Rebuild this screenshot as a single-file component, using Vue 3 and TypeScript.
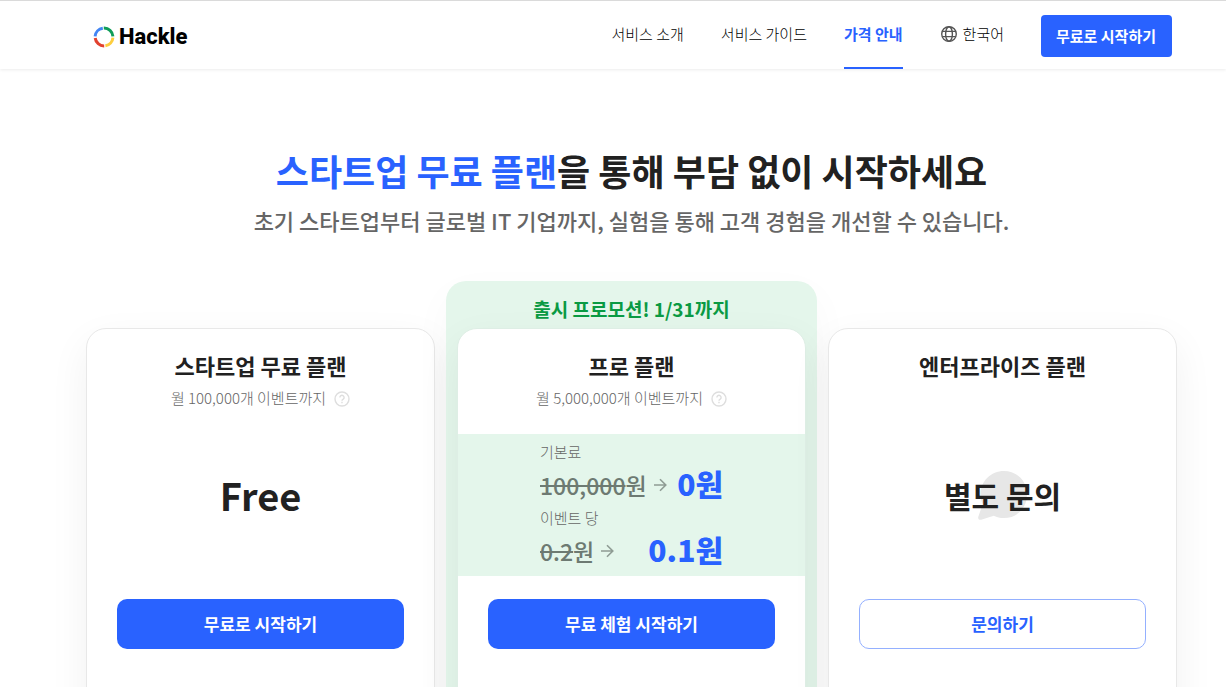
<script setup lang="ts">
interface NavItem {
  label: string
  active?: boolean
}

const navItems: NavItem[] = [
  { label: '서비스 소개' },
  { label: '서비스 가이드' },
  { label: '가격 안내', active: true },
]
</script>

<template>
  <div class="page">
    <header class="header">
      <a class="brand" href="#" aria-label="Hackle">
        <svg class="brand-mark" viewBox="0 0 22 22" fill="none" stroke-width="3" aria-hidden="true">
          <path d="M2.1 10.4A8.9 8.9 0 0 1 9.8 2.2" stroke="#4285f4" />
          <path d="M10.8 2.1A8.9 8.9 0 0 1 19.9 10.4" stroke="#0f9d58" />
          <path d="M19.9 11.6A8.9 8.9 0 0 1 12.4 19.8" stroke="#fdce3f" />
          <path d="M11.2 19.9A8.9 8.9 0 0 1 2.2 12" stroke="#e2422f" />
        </svg>
        <span>Hackle</span>
      </a>
      <nav class="nav">
        <a
          v-for="item in navItems"
          :key="item.label"
          class="nav-link"
          :class="{ active: item.active }"
          href="#"
        >{{ item.label }}</a>
        <button class="language" type="button">
          <svg viewBox="0 0 18 18" fill="none" stroke="#555" stroke-width="1.4" aria-hidden="true">
            <circle cx="9" cy="9" r="7.3" />
            <ellipse cx="9" cy="9" rx="3.4" ry="7.3" />
            <path d="M2.3 6.4h13.4M2.3 11.6h13.4" />
          </svg>
          <span>한국어</span>
        </button>
        <button class="start" type="button">무료로 시작하기</button>
      </nav>
    </header>

    <main class="main">
      <h1><em>스타트업 무료 플랜</em>을 통해 부담 없이 시작하세요</h1>
      <p class="lead">초기 스타트업부터 글로벌 IT 기업까지, 실험을 통해 고객 경험을 개선할 수 있습니다.</p>

      <div class="plans">
        <section class="card side">
          <h2>스타트업 무료 플랜</h2>
          <p class="limit">
            월 100,000개 이벤트까지
            <svg viewBox="0 0 16 16" fill="none" stroke="#dedede" stroke-width="1.4" aria-hidden="true">
              <circle cx="8" cy="8" r="7" />
              <path d="M5.9 6.4a2.1 2.1 0 1 1 3.3 1.7C8.4 8.6 8 8.9 8 9.7M8 10.8v1.4" />
            </svg>
          </p>
          <div class="price free">Free</div>
          <button class="action" type="button">무료로 시작하기</button>
        </section>

        <div class="promo">
          <p class="promo-label">출시 프로모션! 1/31까지</p>
          <section class="card">
            <h2>프로 플랜</h2>
            <p class="limit">
              월 5,000,000개 이벤트까지
              <svg viewBox="0 0 16 16" fill="none" stroke="#dedede" stroke-width="1.4" aria-hidden="true">
                <circle cx="8" cy="8" r="7" />
                <path d="M5.9 6.4a2.1 2.1 0 1 1 3.3 1.7C8.4 8.6 8 8.9 8 9.7M8 10.8v1.4" />
              </svg>
            </p>
            <div class="price band">
              <div class="fees">
                <span class="fee-name">기본료</span>
                <div class="fee">
                  <span class="old"><s>100,000</s>원</span>
                  <svg viewBox="0 0 14 14" fill="none" stroke="#8f9c94" stroke-width="1.6" aria-hidden="true">
                    <path d="M1 7h11.5M7 1.2L12.8 7L7 12.8" />
                  </svg>
                  <strong>0원</strong>
                </div>
                <span class="fee-name">이벤트 당</span>
                <div class="fee">
                  <span class="old"><s>0.2</s>원</span>
                  <svg viewBox="0 0 14 14" fill="none" stroke="#8f9c94" stroke-width="1.6" aria-hidden="true">
                    <path d="M1 7h11.5M7 1.2L12.8 7L7 12.8" />
                  </svg>
                  <strong>0.1원</strong>
                </div>
              </div>
            </div>
            <button class="action" type="button">무료 체험 시작하기</button>
          </section>
        </div>

        <section class="card side">
          <h2>엔터프라이즈 플랜</h2>
          <p class="limit"></p>
          <div class="price contact">
            <svg viewBox="0 0 50 50" fill="#e7e7e7" aria-hidden="true">
              <path d="M26 1C39 1 49 11 49 24.5S39 48 26 48c-4 0-7-.8-10.2-2.3L3.2 49.7C1 50.2-.3 49 .3 46.8L4.7 34C3.3 31 2.5 28 2.5 24.500C2.5 11 13 1 26 1Z" />
            </svg>
            <span>별도 문의</span>
          </div>
          <button class="action outline" type="button">문의하기</button>
        </section>
      </div>
    </main>
  </div>
</template>

<style>
body {
  margin: 0;
}
</style>

<style scoped>
.page {
  height: 100vh;
  overflow: hidden;
  box-sizing: border-box;
  border-top: 1px solid #dadada;
  background: #fff;
  color: #212121;
  font-family: "Noto Sans CJK KR", "Noto Sans", sans-serif;
}
.page * {
  box-sizing: border-box;
}
button {
  font-family: inherit;
  cursor: pointer;
}
h1, h2, p {
  margin: 0;
}
.header {
  height: 68px;
  padding: 0 54px 0 93px;
  display: flex;
  align-items: stretch;
  justify-content: space-between;
  box-shadow: 0 1px 3px rgba(0, 0, 0, 0.08);
}
.brand {
  display: flex;
  align-items: center;
  gap: 4px;
  padding-top: 3px;
  color: #000;
  text-decoration: none;
  font: 800 22px/32px Roboto, sans-serif;
}
.brand-mark {
  width: 22px;
  height: 22px;
}
.nav {
  display: flex;
  align-items: center;
  gap: 37px;
}
.nav-link {
  align-self: stretch;
  border-bottom: 2px solid transparent;
  color: #000;
  font-size: 15px;
  font-weight: 300;
  line-height: 66px;
  text-decoration: none;
}
.nav-link.active {
  border-color: #2962ff;
  color: #2962ff;
  font-weight: 700;
}
.language {
  display: flex;
  align-items: center;
  gap: 5px;
  height: 66px;
  padding: 0 0 2px;
  border: 0;
  background: none;
  color: #000;
  font-size: 15px;
  font-weight: 300;
  line-height: 24px;
}
.language svg {
  width: 18px;
  height: 18px;
}
.start {
  height: 42px;
  margin-top: 2px;
  padding: 0 16px 2px 15px;
  border: 0;
  border-radius: 4px;
  background: #2962ff;
  color: #fff;
  font-size: 15px;
  font-weight: 700;
}
.main {
  padding: 73px 49px 0 86px;
  text-align: center;
}
h1 {
  font-size: 36px;
  font-weight: 700;
  line-height: 56px;
}
h1 em {
  color: #2962ff;
  font-style: normal;
}
.lead {
  margin-top: 5px;
  color: #666;
  font-size: 22px;
  font-weight: 500;
  line-height: 34px;
}
.plans {
  display: grid;
  grid-template-columns: repeat(3, minmax(0, 1fr));
  gap: 22px;
  margin-top: 44px;
}
.card {
  display: flex;
  flex-direction: column;
  min-height: 480px;
  padding-top: 18px;
  border: 1px solid #e8e8e8;
  border-radius: 20px;
  background: #fff;
  box-shadow: 0 14px 40px rgba(0, 0, 0, 0.06);
}
.side {
  margin-top: 47px;
}
.promo {
  margin: 0 -11px;
  padding: 0 11px;
  border-radius: 20px;
  background: #e4f6eb;
  box-shadow: 0 14px 40px rgba(0, 0, 0, 0.03);
}
.promo .card {
  border-color: #deeee5;
}
.promo-label {
  height: 47px;
  padding-top: 11px;
  color: #0a9a43;
  font-size: 19px;
  font-weight: 700;
  line-height: 34px;
}
h2 {
  font-size: 22px;
  font-weight: 700;
  line-height: 36px;
}
.limit {
  display: flex;
  align-items: center;
  justify-content: center;
  gap: 8px;
  height: 28px;
  color: #666;
  font-size: 15px;
  font-weight: 300;
}
.limit svg {
  width: 16px;
  height: 16px;
  margin-top: 4px;
}
.price {
  display: grid;
  place-items: center;
  height: 142px;
  margin-top: 23px;
  font-weight: 700;
}
.free {
  padding-bottom: 22px;
  font-size: 38px;
}
.band {
  background: #e4f6eb;
}
.fees {
  width: 183px;
  padding-top: 4px;
  text-align: left;
}
.fee-name {
  display: block;
  color: #666;
  font-size: 15px;
  font-weight: 300;
  line-height: 22px;
}
.fee {
  display: flex;
  align-items: center;
  gap: 6px;
  height: 44px;
}
.old {
  color: #6d7a72;
  font-size: 23px;
  font-weight: 500;
}
.fee svg {
  width: 14px;
  height: 14px;
}
.fee strong {
  margin-left: auto;
  padding-bottom: 4px;
  color: #2962ff;
  font-size: 30px;
  line-height: 40px;
}
.contact {
  padding-bottom: 20px;
  font-size: 30px;
}
.contact > * {
  grid-area: 1 / 1;
}
.contact svg {
  width: 50px;
  height: 50px;
}
.action {
  height: 50px;
  margin: 23px 30px 0;
  padding: 0 0 2px;
  border: 0;
  border-radius: 10px;
  background: #2962ff;
  color: #fff;
  font-size: 17px;
  font-weight: 700;
}
.outline {
  border: 1px solid #94b0ff;
  background: #fff;
  color: #2962ff;
}
</style>
